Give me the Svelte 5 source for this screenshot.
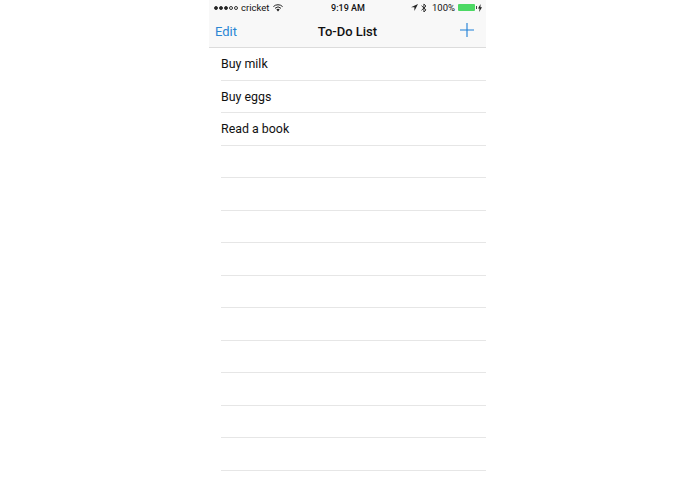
<script>
const todos = ['Buy milk', 'Buy eggs', 'Read a book', '', '', '', '', '', '', '', '', '', '', ''];
</script>

<div class="page">
    <div class="phone">
        <header class="header">
            <div class="status">
                <div class="status-left">
                    <span class="signal">
                        <i class="on"></i><i class="on"></i><i class="on"></i><i></i><i></i>
                    </span>
                    <span>cricket</span>
                    <svg class="wifi" width="10" height="8" viewBox="0 0 10 8">
                        <path d="M0.4 2.6a6.6 6.6 0 0 1 9.2 0M2 4.3a4.3 4.3 0 0 1 6 0" fill="none" stroke="#222" stroke-width="1"/>
                        <path d="M3.3 5.5a2.4 2.4 0 0 1 3.4 0L5 7.6z" fill="#222"/>
                    </svg>
                </div>
                <div class="time">9:19 AM</div>
                <div class="status-right">
                    <svg width="7" height="7" viewBox="0 0 7 7"><path d="M7 0L0 3.2h3.4V7z" fill="#222"/></svg>
                    <svg class="bt" width="6" height="10" viewBox="0 0 6 10"><path d="M0.5 2.7L5 6.9 2.9 9V1L5 3.1 0.5 7.3" fill="none" stroke="#222" stroke-width="0.9"/></svg>
                    <span>100%</span>
                    <span class="battery"></span>
                    <svg width="4" height="8" viewBox="0 0 4 8"><path d="M2.6 0L0 4.6h1.5L1.2 8 4 3.3H2.4z" fill="#222"/></svg>
                </div>
            </div>
            <nav class="nav">
                <span class="edit">Edit</span>
                <span class="title">To-Do List</span>
                <svg class="add" width="14" height="14" viewBox="0 0 14 14">
                    <path d="M7 0V14M0 7H14" stroke="#1c7ed6" stroke-width="1.1"/>
                </svg>
            </nav>
        </header>
        <ul class="list">
            {#each todos as todo}
                <li>{todo}</li>
            {/each}
        </ul>
    </div>
</div>

<style>
:global(body) {
    background: #fff;
}

.page {
    display: flex;
    justify-content: center;
    height: 494px;
    overflow: hidden;
    font-family: Roboto, "Liberation Sans", Arial, sans-serif;
    color: #111;
}

.phone {
    width: 277px;
}

.header {
    height: 47px;
    background: #f8f8f8;
    border-bottom: 1px solid #dcdcdc;
}

.status {
    display: grid;
    grid-template-columns: 1fr auto 1fr;
    align-items: center;
    height: 15px;
    padding: 0 4px 0 5px;
    font-size: 9.5px;
}

.status-left,
.status-right {
    display: flex;
    align-items: center;
    gap: 3px;
}

.status-right {
    justify-content: flex-end;
}

.time {
    font-size: 9px;
    font-weight: 500;
}

.wifi {
    margin-left: 1px;
}

.bt {
    margin-right: 2px;
}

.signal {
    display: flex;
    gap: 1px;
}

.signal i {
    width: 4px;
    height: 4px;
    box-sizing: border-box;
    border: 0.5px solid #333;
    border-radius: 50%;
}

.signal i.on {
    background: #222;
}

.battery {
    position: relative;
    width: 17px;
    height: 7px;
    background: #4cd964;
    border-radius: 1px;
}

.battery::after {
    content: "";
    position: absolute;
    right: -2px;
    top: 2px;
    width: 1px;
    height: 3px;
    background: #444;
}

.nav {
    display: grid;
    grid-template-columns: 1fr auto 1fr;
    align-items: center;
    height: 32px;
    padding: 0 6px;
    box-sizing: border-box;
}

.edit {
    font-size: 13px;
    color: #2a86d4;
}

.title {
    font-size: 13px;
    font-weight: 500;
}

.add {
    justify-self: end;
    margin: 0 6px 2px 0;
}

.list {
    margin: 0;
    padding: 0 0 0 12px;
    list-style: none;
}

.list li {
    display: flex;
    align-items: center;
    height: 32.5px;
    box-sizing: border-box;
    border-bottom: 1px solid #e6e6e6;
    font-size: 12.4px;
}
</style>
